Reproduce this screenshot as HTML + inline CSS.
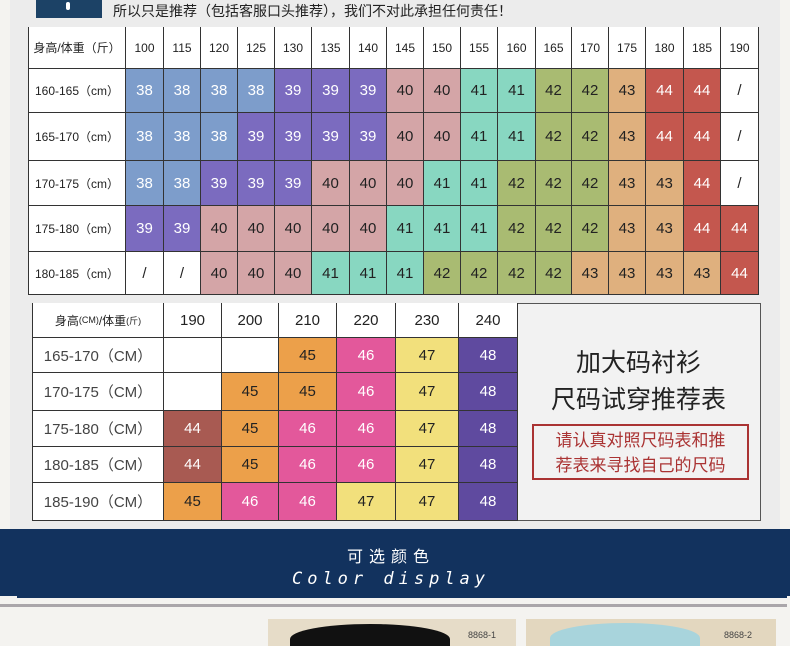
<!DOCTYPE html>
<html><head><meta charset="utf-8"><style>
html,body{margin:0;width:790px;height:646px;overflow:hidden}
body{background:#f4f3f0;font-family:"Liberation Sans","Noto Sans CJK SC",sans-serif;position:relative}
.bg{position:absolute;left:10px;top:0;width:770px;height:529px;background:#ececec}
.c{position:absolute;box-sizing:border-box;display:flex;align-items:center;justify-content:center;font-size:15px;color:#222;border-right:1.5px solid #333;border-bottom:1.5px solid #333}
.w{color:#fff}
.hd{font-size:12px}
.f{border-left:1.5px solid #333}
.g{color:#444;font-size:15px}
</style></head><body>
<div class="bg"></div>
<div style="position:absolute;left:36px;top:0;width:66px;height:18px;background:#1c4266"></div>
<div style="position:absolute;left:66px;top:2px;width:4px;height:8px;background:#fff;border-radius:2px"></div>
<div style="position:absolute;left:113px;top:1px;font-size:14px;color:#222">所以只是推荐（包括客服口头推荐），我们不对此承担任何责任！</div>
<div id="t1" style="position:absolute;left:28px;top:27px;width:731px;height:268px;background:#fff;border:1.5px solid #333;box-sizing:border-box"></div>
<div id="t2" style="position:absolute;left:32px;top:303px;width:729px;height:218px;background:#f2f2f2;border:1.5px solid #555;box-sizing:border-box"></div>
<div style="position:absolute;left:517px;top:345px;width:243px;text-align:center;font-size:25px;line-height:37px;color:#222">加大码衬衫<br>尺码试穿推荐表</div>
<div style="position:absolute;left:532px;top:424px;width:217px;height:56px;border:2px solid #a33;box-sizing:border-box;color:#a33;font-size:17px;line-height:25px;text-align:center;padding-top:2px">请认真对照尺码表和推<br>荐表来寻找自己的尺码</div>
<div style="position:absolute;left:0;top:529px;width:790px;height:67px;background:#12325e"></div>
<div style="position:absolute;left:0;top:543px;width:782px;text-align:center;color:#fff;font-size:16px;letter-spacing:6px">可选颜色</div>
<div style="position:absolute;left:0;top:569px;width:782px;text-align:center;color:#fff;font-size:17px;letter-spacing:5px;font-style:italic;font-family:'DejaVu Sans Mono',monospace">Color display</div>
<div style="position:absolute;left:17px;top:596px;width:770px;height:2px;background:#12325e"></div>
<div style="position:absolute;left:0;top:604px;width:787px;height:3px;background:#aaa6aa"></div>
<div style="position:absolute;left:268px;top:619px;width:248px;height:27px;background:#e6dcc8;overflow:hidden"><div style="position:absolute;left:22px;top:5px;width:160px;height:30px;background:#111;border-radius:50% 50% 0 0"></div><div style="position:absolute;left:200px;top:11px;font-size:9px;color:#444">8868-1</div></div>
<div style="position:absolute;left:526px;top:619px;width:250px;height:27px;background:#e3d7bf;overflow:hidden"><div style="position:absolute;left:24px;top:4px;width:150px;height:30px;background:#a8d4dc;border-radius:50% 50% 0 0"></div><div style="position:absolute;left:198px;top:11px;font-size:9px;color:#444">8868-2</div></div>
<script>
var C={38:'#7d9dcb',39:'#7b6bbf',40:'#d4a5a7',41:'#88d7c1',42:'#a9bb72',43:'#dfb07e',44:'#c4574e'};
var xs=[28,126,164,201,238,275,312,350,387,424,461,498,536,572,609,646,684,721,759];
var ys=[27,69,113,161,206,252,295];
var hdr=['身高/体重（斤）',100,115,120,125,130,135,140,145,150,155,160,165,170,175,180,185,190];
var rows=[['160-165（cm）',38,38,38,38,39,39,39,40,40,41,41,42,42,43,44,44,'/'],
['165-170（cm）',38,38,38,39,39,39,39,40,40,41,41,42,42,43,44,44,'/'],
['170-175（cm）',38,38,39,39,39,40,40,40,41,41,42,42,42,43,43,44,'/'],
['175-180（cm）',39,39,40,40,40,40,40,41,41,41,42,42,42,43,43,44,44],
['180-185（cm）','/','/',40,40,40,41,41,41,42,42,42,42,43,43,43,43,44]];
var h='';
function cell(x,y,w,hh,t,bg,cls){h+='<div class="c '+(cls||'')+'" style="left:'+x+'px;top:'+y+'px;width:'+w+'px;height:'+hh+'px;background:'+(bg||'transparent')+'">'+t+'</div>';}
var all=[hdr].concat(rows);
for(var r=0;r<6;r++)for(var c=0;c<18;c++){var v=all[r][c];var bg=(r>0&&c>0&&C[v])?C[v]:'#fff';var cls=(v==38||v==39||v==44)&&r>0?'w':'';if(c==0)cls+=' hd f';if(r==0&&c>0)cls='hd';cell(xs[c],ys[r],xs[c+1]-xs[c],ys[r+1]-ys[r],v,bg,cls);}
var C2={44:'#a85a52',45:'#eca04a',46:'#e3589b',47:'#f2e07c',48:'#5f4a9f'};
var x2=[32,164,222,279,337,396,459,518];
var y2=[303,338,373,411,447,483,521];
var all2=[['身高<span style="font-size:9px">(CM)</span>/体重<span style="font-size:9px">(斤)</span>',190,200,210,220,230,240],
['165-170（CM）','','',45,46,47,48],['170-175（CM）','',45,45,46,47,48],['175-180（CM）',44,45,46,46,47,48],['180-185（CM）',44,45,46,46,47,48],['185-190（CM）',45,46,46,47,47,48]];
for(var r=0;r<6;r++)for(var c=0;c<7;c++){var v=all2[r][c];var bg=(r>0&&c>0&&C2[v])?C2[v]:'#fff';var cls=(v==44||v==46||v==48)&&r>0?'w':'';if(c==0&&r==0)cls='hd';if(c==0)cls+=' f';if(c==0&&r>0)cls+=' g';
cell(x2[c],y2[r],x2[c+1]-x2[c],y2[r+1]-y2[r],v,bg,cls);}
document.body.insertAdjacentHTML('beforeend',h);
</script>
</body></html>
